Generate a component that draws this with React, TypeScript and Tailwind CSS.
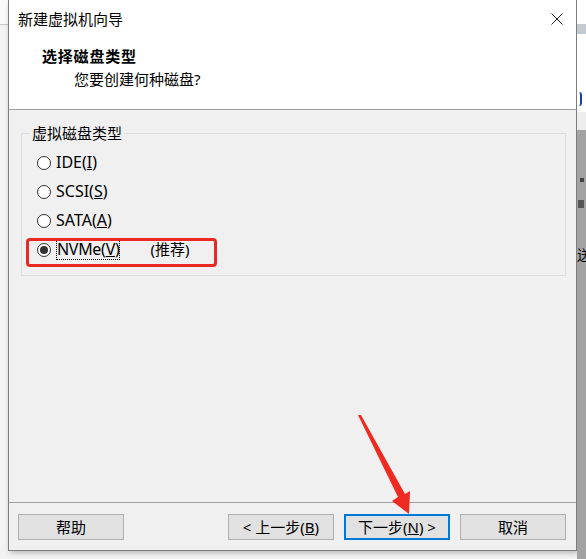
import React from "react";

const font = "font-['Noto_Sans','Noto_Sans_CJK_SC',sans-serif]";

function Radio({ checked }: { checked?: boolean }) {
  return (
    <span className="flex h-[14px] w-[14px] shrink-0 items-center justify-center rounded-full border border-[#333] bg-white">
      {checked && <span className="h-[8px] w-[8px] rounded-full bg-[#333]" />}
    </span>
  );
}

function Option({
  label,
  hot,
  checked,
  extra,
}: {
  label: string;
  hot: string;
  checked?: boolean;
  extra?: string;
}) {
  const text = (
    <>
      {label}(<span className="underline">{hot}</span>)
    </>
  );
  return (
    <div className="flex h-[29px] items-center gap-[5px] text-[16px]">
      <Radio checked={checked} />
      {checked ? (
        <span className="border border-dotted border-black leading-[19px] tracking-[-0.3px]">{text}</span>
      ) : (
        <span className="leading-[21px]">{text}</span>
      )}
      {extra && <span className="ml-[25px] text-[15px]">{extra}</span>}
    </div>
  );
}

function Btn({
  children,
  primary,
}: {
  children: React.ReactNode;
  primary?: boolean;
}) {
  return (
    <button
      type="button"
      className={
        "flex h-[26px] w-[106px] items-center justify-center bg-[#e1e1e1] text-[15px] text-black " +
        (primary ? "border-2 border-[#0078d7]" : "border border-[#adadad]")
      }
    >
      {children}
    </button>
  );
}

export default function App() {
  return (
    <div
      className={`relative flex h-[559px] w-[586px] overflow-hidden bg-[#f4f4f4] text-[15px] text-black ${font}`}
    >
      {/* desktop behind, left */}
      <div className="flex w-[8px] flex-col">
        <div className="h-[25px] border-b border-[#c9c9c9] bg-[#fafafa]" />
        <div className="flex-1 bg-[#f3f3f3]" />
      </div>

      {/* wizard window */}
      <div className="flex h-[551px] w-[569px] flex-col border-x border-b border-[#7d7d7d] bg-[#f0f0f0] shadow-[2px_2px_6px_rgba(0,0,0,0.25)]">
        <div className="h-[110px] border-b border-[#a0a0a0] bg-white">
          <div className="flex h-[38px] items-center justify-between pl-[9px] pr-[13px]">
            <span className="text-[15px]">新建虚拟机向导</span>
            <svg width="12" height="12" viewBox="0 0 12 12">
              <path d="M0.5 0.5 L11.5 11.5 M11.5 0.5 L0.5 11.5" stroke="#222" strokeWidth="1" />
            </svg>
          </div>
          <div className="mt-[8px] pl-[33px] text-[15px] font-bold leading-[20px] tracking-[0.8px]">选择磁盘类型</div>
          <div className="mt-[3px] pl-[65px] text-[15px] leading-[20px]">您要创建何种磁盘?</div>
        </div>

        <div className="flex-1 pl-[12px] pr-[10px] pt-[13px]">
          <fieldset className="h-[153px] border border-[#dcdcdc]">
            <legend className="ml-[8px] px-[2px] leading-[20px]">虚拟磁盘类型</legend>
            <div className="pl-[15px] pt-[5px]">
              <Option label="IDE" hot="I" />
              <Option label="SCSI" hot="S" />
              <Option label="SATA" hot="A" />
              <Option label="NVMe" hot="V" checked extra="(推荐)" />
            </div>
          </fieldset>
        </div>

        <div className="flex h-[48px] items-start border-t border-[#a0a0a0] pl-[9px] pt-[11px]">
          <Btn>帮助</Btn>
          <div className="ml-[104px] flex gap-[10px]">
            <Btn>
              &lt; 上一步(<span className="underline">B</span>)
            </Btn>
            <Btn primary>
              下一步(<span className="underline">N</span>) &gt;
            </Btn>
            <Btn>取消</Btn>
          </div>
        </div>
      </div>

      {/* desktop behind, right */}
      <div className="flex w-[9px] flex-col">
        <div className="h-[24px] bg-white" />
        <div className="h-[10px] bg-[#c3c9d0]" />
        <div className="flex h-[78px] items-end bg-white pb-[6px]">
          <span className="ml-[2px] h-[14px] w-[3px] rounded-r-full border-r-2 border-[#1f3f9a]" />
        </div>
        <div className="h-[18px] bg-[#ededed]" />
        <div className="flex flex-1 flex-col bg-[#a3a3a3]">
          <div className="ml-[3px] mt-[48px] h-[4px] w-[4px] bg-[#444]" />
          <div className="ml-[1px] mt-[18px] h-[8px] w-[6px] bg-[#555]" />
          <span className="mt-[40px] text-[14px] leading-none">送</span>
        </div>
      </div>

      {/* annotations */}
      <div className="absolute left-[26px] top-[238px] h-[29px] w-[191px] rounded-[4px] border-[3px] border-[#ea2a22]" />
      <svg className="pointer-events-none absolute left-0 top-0" width="586" height="559">
        <polygon
          points="358,415 361,415 405,494 410,491 409,514 392,501 398,497"
          fill="#ef2a20"
        />
      </svg>
    </div>
  );
}
